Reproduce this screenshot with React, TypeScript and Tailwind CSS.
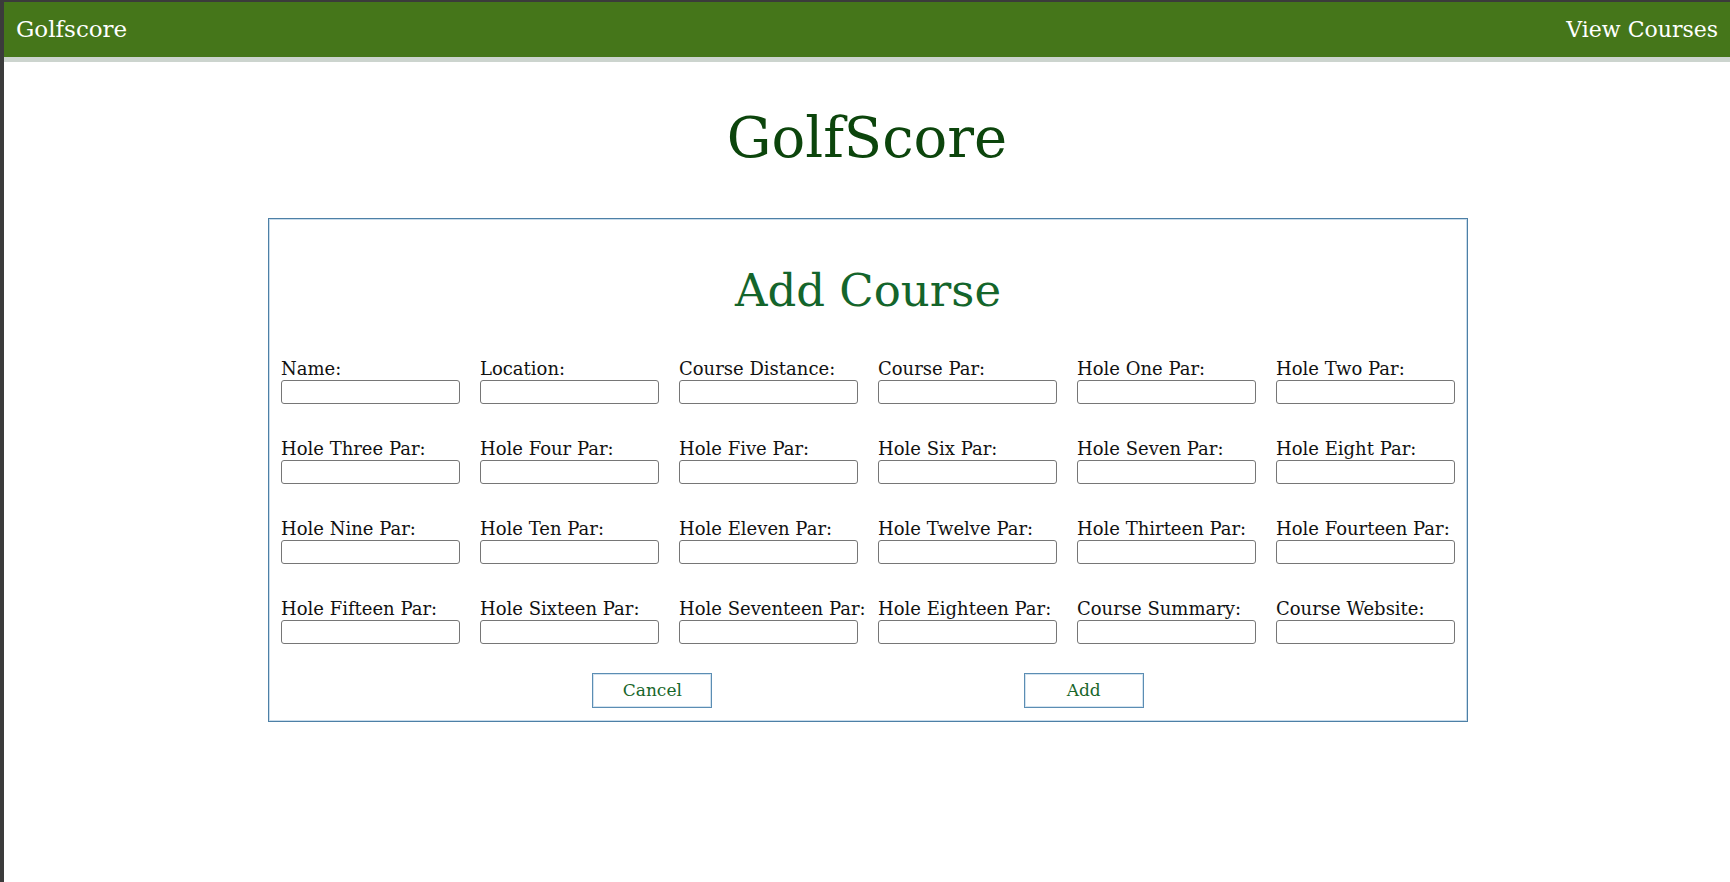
import React from "react";

const fields = [
  "Name:",
  "Location:",
  "Course Distance:",
  "Course Par:",
  "Hole One Par:",
  "Hole Two Par:",
  "Hole Three Par:",
  "Hole Four Par:",
  "Hole Five Par:",
  "Hole Six Par:",
  "Hole Seven Par:",
  "Hole Eight Par:",
  "Hole Nine Par:",
  "Hole Ten Par:",
  "Hole Eleven Par:",
  "Hole Twelve Par:",
  "Hole Thirteen Par:",
  "Hole Fourteen Par:",
  "Hole Fifteen Par:",
  "Hole Sixteen Par:",
  "Hole Seventeen Par:",
  "Hole Eighteen Par:",
  "Course Summary:",
  "Course Website:",
];

function Field({ label }: { label: string }) {
  return (
    <label className="flex flex-col">
      <span className="block text-[18px] leading-[22px] text-[#111] whitespace-nowrap">
        {label}
      </span>
      <input
        type="text"
        className="block w-full h-[24px] border border-[#767676] rounded-[3px] bg-white"
      />
    </label>
  );
}

export default function App() {
  return (
    <div className="min-h-screen bg-white border-l-4 border-t-2 border-[#3b3b3b] font-['DejaVu_Serif',serif]">
      {/* Top nav */}
      <nav className="h-[55px] bg-[#45761a] flex items-center justify-between px-[12px] text-white">
        <a href="#" className="text-[23px]">Golfscore</a>
        <a href="#" className="text-[22px]">View Courses</a>
      </nav>
      <div className="h-[5px] bg-[#ccd4ce]" />

      <h1 className="mt-[43px] mb-[48px] text-center text-[56px] leading-[65px] text-[#0c450c]">
        GolfScore
      </h1>

      {/* Add course card */}
      <div className="ml-[264px] w-[1200px] border border-[#4d80a6] shadow-[inset_0_0_0_1px_#c9dceb] px-[12px] pt-[46px] pb-[13px]">
        <h2 className="text-center text-[45px] leading-[52px] text-[#14652b]">
          Add Course
        </h2>

        <form className="mt-[41px]">
          <div className="grid grid-cols-6 gap-x-[20px] gap-y-[34px]">
            {fields.map((f) => (
              <Field key={f} label={f} />
            ))}
          </div>

          <div className="mt-[29px] flex justify-evenly">
            <button
              type="button"
              className="w-[120px] h-[35px] border border-[#5b8db3] shadow-[inset_0_0_0_1px_#d3e3ef] bg-white text-[17px] text-[#18662a]"
            >
              Cancel
            </button>
            <button
              type="button"
              className="w-[120px] h-[35px] border border-[#5b8db3] shadow-[inset_0_0_0_1px_#d3e3ef] bg-white text-[17px] text-[#18662a]"
            >
              Add
            </button>
          </div>
        </form>
      </div>
    </div>
  );
}
